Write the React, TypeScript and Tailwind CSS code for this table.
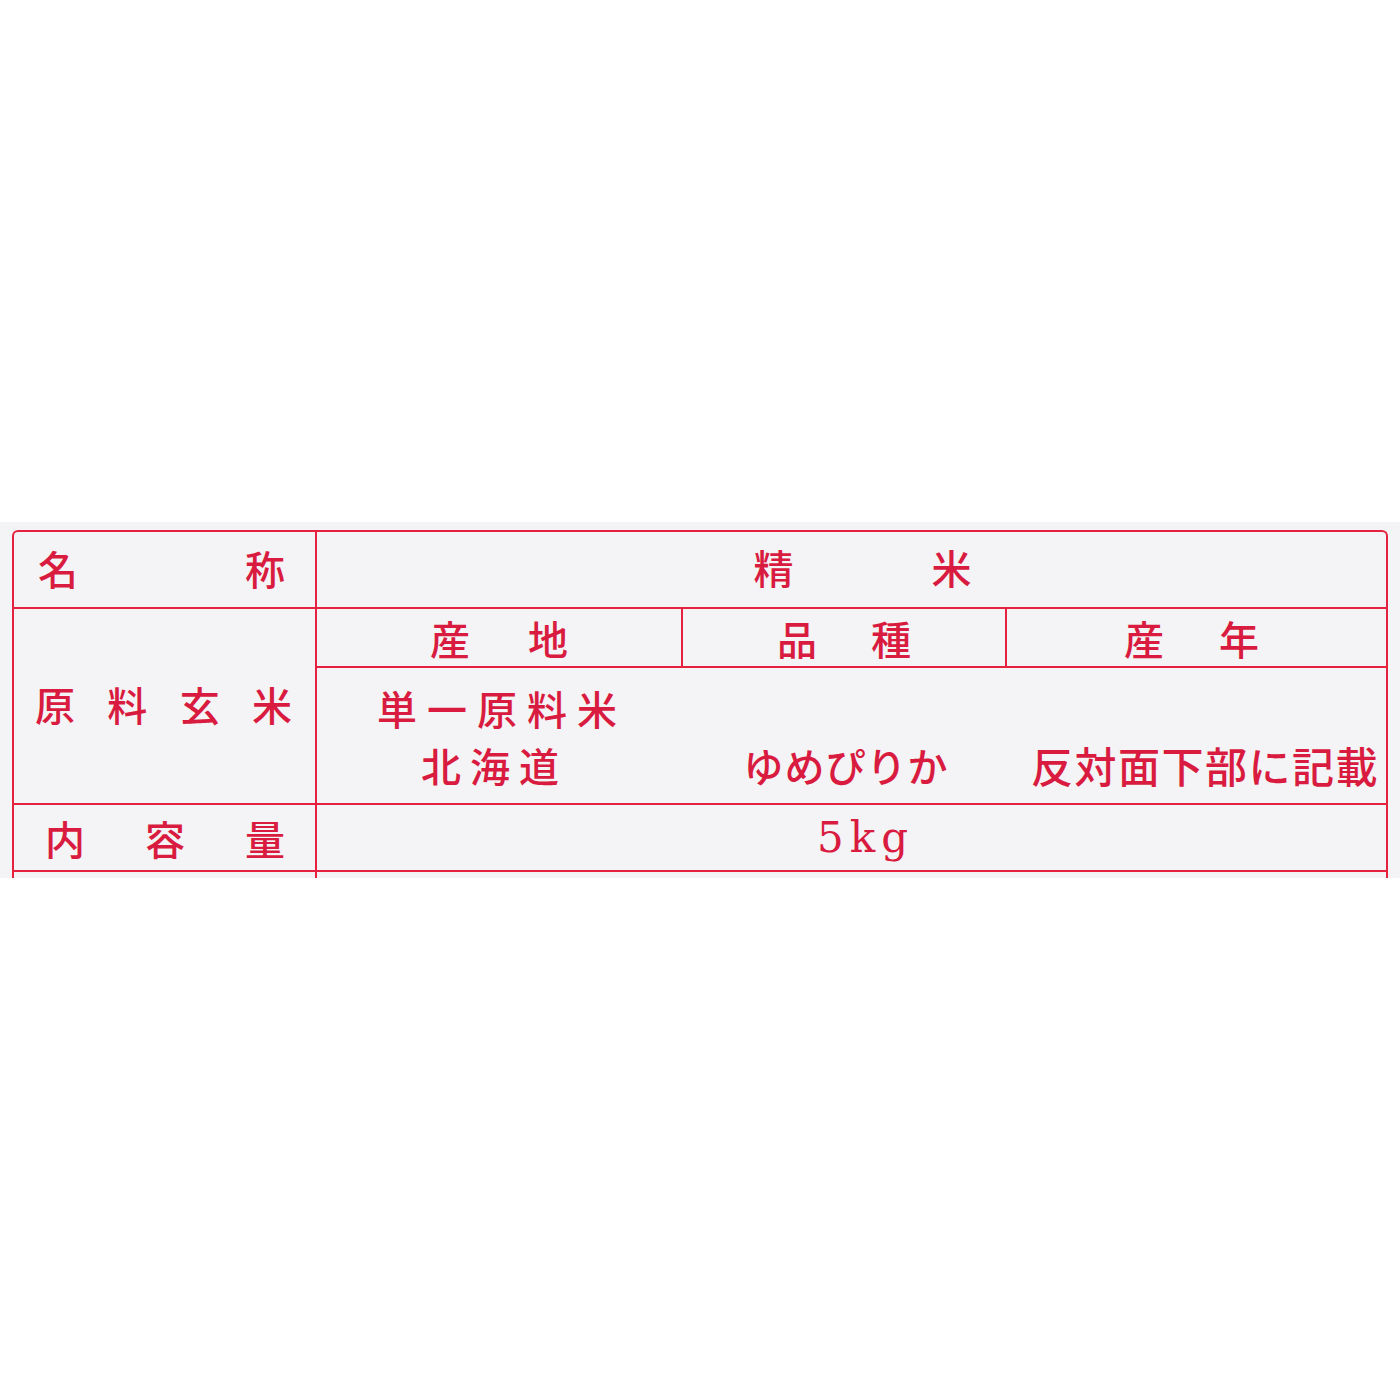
const jp = { fontFamily: '"Noto Sans CJK JP", "Noto Sans", sans-serif' };

function Spread({ chars, className }: { chars: string[]; className: string }) {
  return (
    <div className={"flex h-full items-center justify-between " + className}>
      {chars.map((c, i) => (
        <span key={i}>{c}</span>
      ))}
    </div>
  );
}

export default function App() {
  return (
    <div className="flex h-[1400px] w-[1400px] flex-col bg-white font-medium text-[#d81b3f]" style={jp}>
      <div className="h-[522px]" />
      <div className="h-[356px] overflow-hidden bg-[#f4f3f5] px-[12px] pt-[8px]">
        <div className="flex flex-col rounded-t-[6px] border-2 border-b-0 border-[#e5213f] text-[40px] leading-none">
          {/* 名称 */}
          <div className="flex h-[77px] border-b-2 border-[#e5213f]">
            <div className="w-[303px] border-r-2 border-[#e5213f]">
              <Spread chars={["名", "称"]} className="pb-[4px] pl-[24px] pr-[30px]" />
            </div>
            <div className="flex flex-1 items-center justify-center gap-[138px] pb-[6px] pl-[22px]">
              <span>精</span>
              <span>米</span>
            </div>
          </div>

          {/* 原料玄米 */}
          <div className="flex h-[196px] border-b-2 border-[#e5213f]">
            <div className="w-[303px] border-r-2 border-[#e5213f]">
              <Spread chars={["原", "料", "玄", "米"]} className="pb-[4px] pl-[21px] pr-[23px]" />
            </div>
            <div className="flex flex-1 flex-col">
              <div className="grid h-[59px] grid-cols-[366px_324px_1fr] border-b-2 border-[#e5213f]">
                <div className="flex items-center justify-center gap-[58px] border-r-2 border-[#e5213f]">
                  <span>産</span>
                  <span>地</span>
                </div>
                <div className="flex items-center justify-center gap-[54px] border-r-2 border-[#e5213f]">
                  <span>品</span>
                  <span>種</span>
                </div>
                <div className="flex items-center justify-center gap-[55px] pr-[10px]">
                  <span>産</span>
                  <span>年</span>
                </div>
              </div>
              <div className="flex flex-1 flex-col pt-[20px]">
                <div className="pl-[60px] tracking-[10px]">単一原料米</div>
                <div className="mt-[16px] grid grid-cols-[366px_324px_1fr] items-center">
                  <div className="pl-[104px] tracking-[9px]">北海道</div>
                  <div className="pl-[2px] text-center text-[40px] tracking-[1px]">ゆめぴりか</div>
                  <div className="pl-[24px] text-[42px] tracking-[1.5px]">反対面下部に記載</div>
                </div>
              </div>
            </div>
          </div>

          {/* 内容量 */}
          <div className="flex h-[67px] border-b-2 border-[#e5213f]">
            <div className="w-[303px] border-r-2 border-[#e5213f]">
              <Spread chars={["内", "容", "量"]} className="pl-[31px] pr-[30px]" />
            </div>
            <div className="flex flex-1 items-center justify-center">
              <span
                className="pl-[28px] text-[42px] font-normal tracking-[6px]"
                style={{ fontFamily: '"DejaVu Serif", serif' }}
              >
                5kg
              </span>
            </div>
          </div>

          <div className="flex h-[20px]">
            <div className="w-[303px] border-r-2 border-[#e5213f]" />
            <div className="flex-1" />
          </div>
        </div>
      </div>
      <div className="flex-1" />
    </div>
  );
}
